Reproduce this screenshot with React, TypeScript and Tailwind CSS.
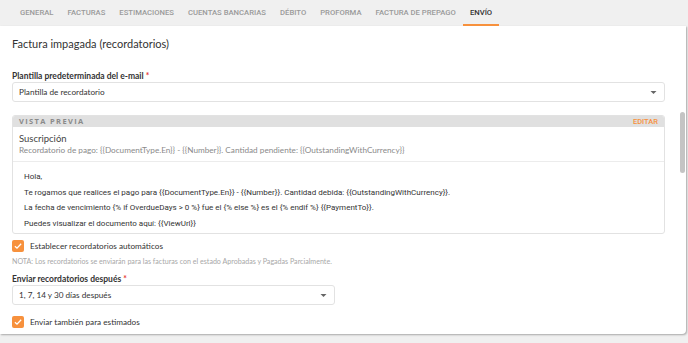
const tabs = ['General', 'Facturas', 'Estimaciones', 'Cuentas bancarias', 'Débito', 'Proforma', 'Factura de prepago', 'Envío'];

function Check({ label }: { label: string }) {
  return (
    <div className="flex h-[12px] items-center gap-[6px]">
      <span className="flex h-[12px] w-[12px] items-center justify-center rounded-[2px] bg-[#f7913d]">
        <svg viewBox="0 0 12 12" className="h-[10px] w-[10px]" fill="none" stroke="white" strokeWidth="1.6">
          <path d="M2.3 6.2 L4.8 8.6 L9.8 3.3" />
        </svg>
      </span>
      <span className="text-[8.2px] text-[#333]">{label}</span>
    </div>
  );
}

function Select({ value, width }: { value: string; width: string }) {
  return (
    <div className={`flex h-[20px] items-center justify-between rounded-[3px] border border-[#e2e2e2] bg-white pl-[6px] pr-[7px] ${width}`}>
      <span className="text-[8.2px] text-[#333]">{value}</span>
      <svg viewBox="0 0 8 4" className="h-[3px] w-[7px]"><path d="M0 0 H8 L4 4 Z" fill="#666" /></svg>
    </div>
  );
}

export default function App() {
  return (
    <div className="relative h-[343px] w-[688px] overflow-hidden bg-[#f0f0f0] font-['Lato',sans-serif]">
      {/* pestañas */}
      <div className="flex h-[26px] items-stretch pl-[13px] font-['Roboto',sans-serif]">
        {tabs.map((t, i) => {
          const active = i === tabs.length - 1;
          return (
            <div
              key={t}
              className={`flex items-center border-b-2 px-[7px] pt-[1px] text-[7.7px] font-medium uppercase ${
                active ? 'border-[#f7913d] text-[#333]' : 'border-transparent text-[#9a9a9a]'
              }`}
            >
              {t}
            </div>
          );
        })}
      </div>

      {/* tarjeta */}
      <div className="mr-[2px] h-[308px] rounded-br-[4px] bg-white pl-[12px] pr-[22px] pt-[10px] shadow-[1px_1px_2px_rgba(0,0,0,0.3)]">
        <div className="text-[11px] leading-[16px] text-[#333]">Factura impagada (recordatorios)</div>

        <div className="mt-[18px] text-[8.5px] font-bold leading-[12px] text-[#333]">
          Plantilla predeterminada del e-mail <span className="text-[#e53935]">*</span>
        </div>
        <Select value="Plantilla de recordatorio" width="w-[653px]" />

        <div className="mt-[13px] w-[653px] overflow-hidden rounded-[3px] border border-[#e2e2e2]">
          <div className="flex h-[11px] items-center justify-between bg-[#e0e0e0] px-[6px]">
            <span className="font-['Open_Sans',sans-serif] text-[7.5px] font-bold tracking-[0.18em] text-[#8a8a8a]">VISTA PREVIA</span>
            <span className="font-['Roboto',sans-serif] text-[7.5px] font-medium text-[#f7913d]">EDITAR</span>
          </div>
          <div className="border-b border-[#ececec] px-[6px] pb-[5px] pt-[6px]">
            <div className="text-[9.5px] leading-[12px] text-[#444]">Suscripción</div>
            <div className="text-[8.2px] leading-[11px] text-[#8a8a8a]">
              Recordatorio de pago: {'{{DocumentType.En}}'} - {'{{Number}}'}. Cantidad pendiente: {'{{OutstandingWithCurrency}}'}
            </div>
          </div>
          <div className="flex flex-col px-[11px] pb-[2px] pt-[7px] font-['Roboto',sans-serif] text-[8px] leading-[15.6px] text-[#333]">
            <div>Hola,</div>
            <div>Te rogamos que realices el pago para {'{{DocumentType.En}}'} - {'{{Number}}'}. Cantidad debida: {'{{OutstandingWithCurrency}}'}.</div>
            <div>La fecha de vencimiento {'{% if OverdueDays > 0 %}'} fue el {'{% else %}'} es el {'{% endif %}'} {'{{PaymentTo}}'}.</div>
            <div>Puedes visualizar el documento aquí: {'{{ViewUrl}}'}</div>
          </div>
        </div>

        <div className="mt-[6px]">
          <Check label="Establecer recordatorios automáticos" />
        </div>
        <div className="mt-[5px] text-[7.1px] leading-[10px] text-[#a8a8a8]">
          NOTA: Los recordatorios se enviarán para las facturas con el estado Aprobadas y Pagadas Parcialmente.
        </div>

        <div className="mt-[6px] text-[8.5px] font-bold leading-[12px] text-[#333]">
          Enviar recordatorios después <span className="text-[#e53935]">*</span>
        </div>
        <Select value="1, 7, 14 y 30 días después" width="w-[323px]" />

        <div className="mt-[11px]">
          <Check label="Enviar también para estimados" />
        </div>
      </div>

      {/* barra de desplazamiento */}
      <div className="absolute left-[680px] top-[112px] h-[61px] w-[5px] rounded-full bg-[#c4c4c4]" />
    </div>
  );
}
